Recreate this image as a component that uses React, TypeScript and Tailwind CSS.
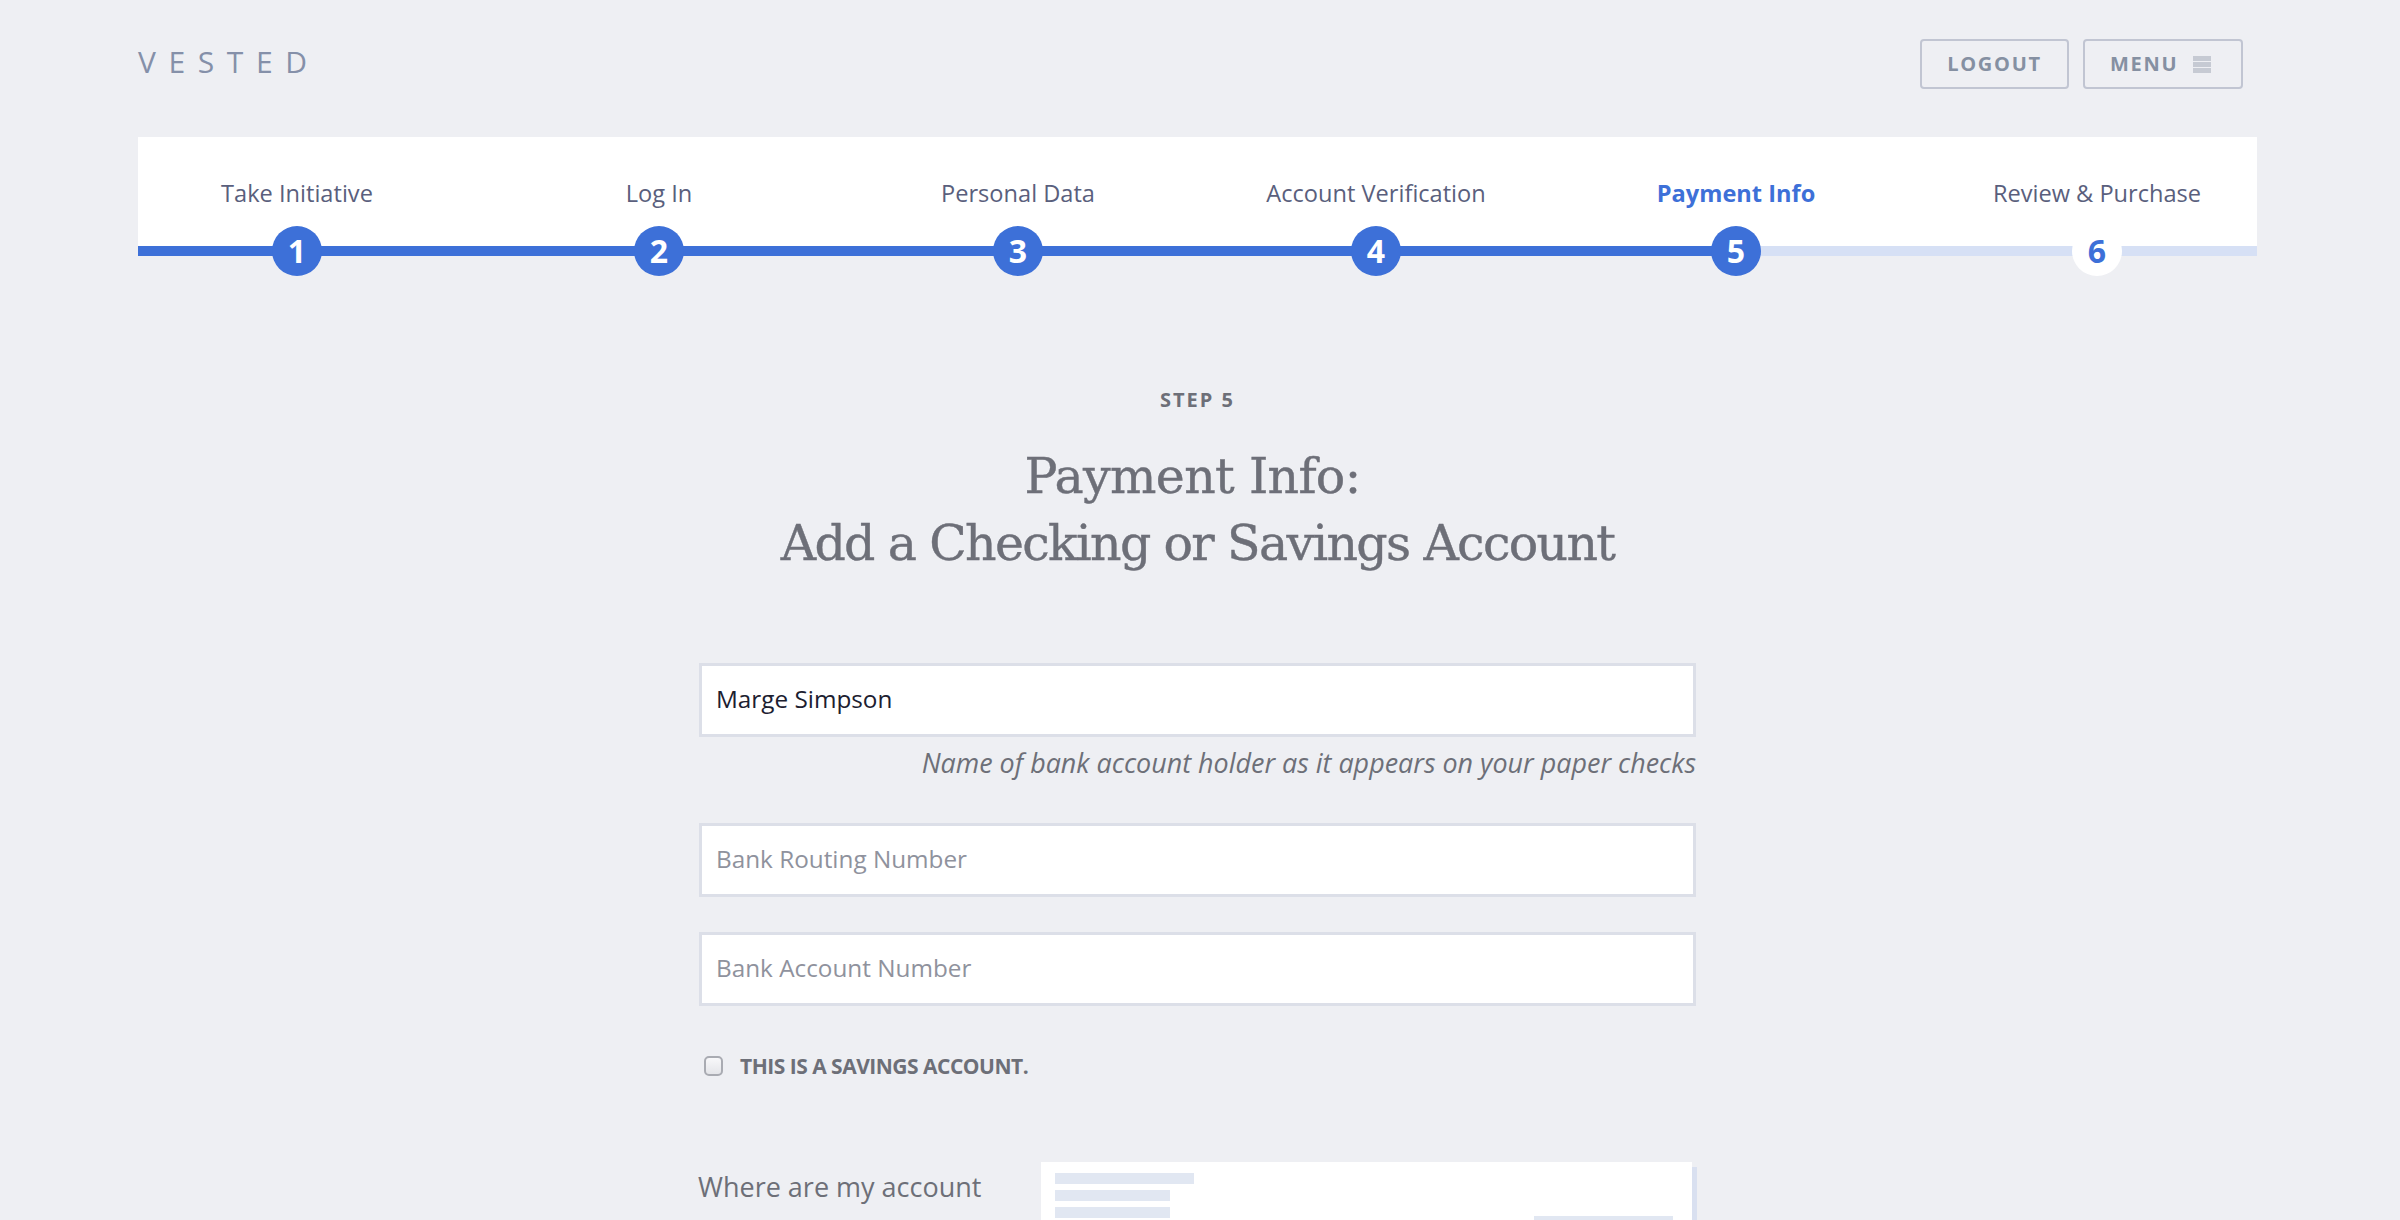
const steps = [
  { label: "Take Initiative", offset: "ml-[99px]", done: true },
  { label: "Log In", offset: "ml-[242px]", done: true },
  { label: "Personal Data", offset: "ml-[239px]", done: true },
  { label: "Account Verification", offset: "ml-[238px]", done: true },
  { label: "Payment Info", offset: "ml-[240px]", done: true, active: true },
  { label: "Review & Purchase", offset: "ml-[241px]", done: false },
]

function Field({ placeholder, value }: { placeholder?: string; value?: string }) {
  return (
    <input
      readOnly
      value={value}
      placeholder={placeholder}
      className="block h-[74px] w-full border-[3px] border-[#dcdfe8] bg-white pr-[14px] pb-[3px] pl-[14px] text-[24.3px] text-[#1c2030] outline-none placeholder:text-[#8f929d]"
    />
  )
}

export default function App() {
  return (
    <div className="h-[1220px] overflow-hidden bg-[#eeeff3] font-['Open_Sans',sans-serif]">
      <div className="mx-[138px] w-[2119px]">
        <header className="flex h-[137px] items-start justify-between pr-[14px]">
          <div className="mt-[42px] text-[30px] leading-[40px] tracking-[0.42em] text-[#8590a9]">VESTED</div>
          <div className="mt-[39px] flex gap-[14px]">
            <button className="h-[50px] w-[149px] rounded-[4px] border-2 border-[#c1c5d2] text-[20px] font-bold tracking-[0.085em] text-[#8590a2]">
              LOGOUT
            </button>
            <button className="flex h-[50px] w-[160px] items-center gap-[15px] rounded-[4px] border-2 border-[#c1c5d2] pl-[25px] text-[20px] font-bold tracking-[0.085em] text-[#8590a2]">
              MENU
              <svg width="18" height="17" viewBox="0 0 18 17" fill="#c6cad3">
                <rect width="18" height="5" />
                <rect y="6" width="18" height="5" />
                <rect y="12" width="18" height="5" />
              </svg>
            </button>
          </div>
        </header>

        <nav className="bg-white">
          <div className="relative z-10 flex h-[109px]">
            {steps.map((step, i) => (
              <div key={step.label} className={`flex w-[120px] flex-col items-center ${step.offset}`}>
                <div
                  className={`mt-[38px] whitespace-nowrap text-[23.6px] leading-[36px] ${
                    step.active ? "font-bold text-[#3d70d8]" : "text-[#5a5f7d]"
                  }`}
                >
                  {step.label}
                </div>
                <div
                  className={`mt-[15px] flex h-[50px] w-[50px] shrink-0 items-center justify-center rounded-full text-[32px] font-[750] ${
                    step.done ? "bg-[#3d70d8] text-white" : "bg-white text-[#3d70d8]"
                  }`}
                >
                  {i + 1}
                </div>
              </div>
            ))}
          </div>
          <div className="h-[10px] bg-[#d6e0f5]">
            <div className="h-full w-[1598px] bg-[#3d70d8]" />
          </div>
        </nav>
      </div>

      <main className="ml-[699px] w-[997px]">
        <div className="mt-[130px] text-center text-[20px] font-bold leading-[28px] tracking-[0.1em] text-[#6d6f78]">STEP 5</div>
        <h1 className="mt-[29px] text-center font-['DejaVu_Serif',serif] text-[49px] font-normal leading-[67px] tracking-[-1.67px] text-[#6d6f78] [-webkit-text-stroke:0.4px_#6d6f78]">
          <span className="mr-[10px] inline-block tracking-[-0.7px]">Payment Info:</span>
          <br />
          Add a Checking or Savings Account
        </h1>

        <div className="mt-[86px]">
          <Field value="Marge Simpson" />
          <p className="mt-[7px] text-right text-[26.9px] italic leading-[38px] text-[#6d6f78]">
            Name of bank account holder as it appears on your paper checks
          </p>
        </div>
        <div className="mt-[41px]">
          <Field placeholder="Bank Routing Number" />
        </div>
        <div className="mt-[35px]">
          <Field placeholder="Bank Account Number" />
        </div>

        <label className="mt-[50px] flex h-[20px] items-center pl-[5px]">
          <input
            type="checkbox"
            className="h-[20px] w-[19px] appearance-none rounded-[5px] border-2 border-[#a9abb2] bg-linear-to-b from-[#f8f8fa] to-[#e4e5e9]"
          />
          <span className="mt-[2px] ml-[17px] text-[21px] font-bold uppercase tracking-[-0.5px] text-[#6d6f78]">
            This is a savings account.
          </span>
        </label>

        <div className="mt-[86px] flex">
          <div className="-ml-[1px] w-[343px] pt-[5px] text-[27px] leading-[40px] text-[#6d6f78]">
            Where are my account
          </div>
          <div className="flex h-[300px] w-[651px] items-start justify-between bg-white pt-[11px] pr-[19px] pl-[14px] shadow-[5px_5px_0_#d9e0f0]">
            <div>
              <div className="h-[11px] w-[139px] bg-[#e1e7f2]" />
              <div className="mt-[6px] h-[11px] w-[115px] bg-[#e1e7f2]" />
              <div className="mt-[6px] h-[11px] w-[115px] bg-[#e1e7f2]" />
            </div>
            <div className="mt-[43px] h-[11px] w-[139px] bg-[#e1e7f2]" />
          </div>
        </div>
      </main>
    </div>
  )
}
